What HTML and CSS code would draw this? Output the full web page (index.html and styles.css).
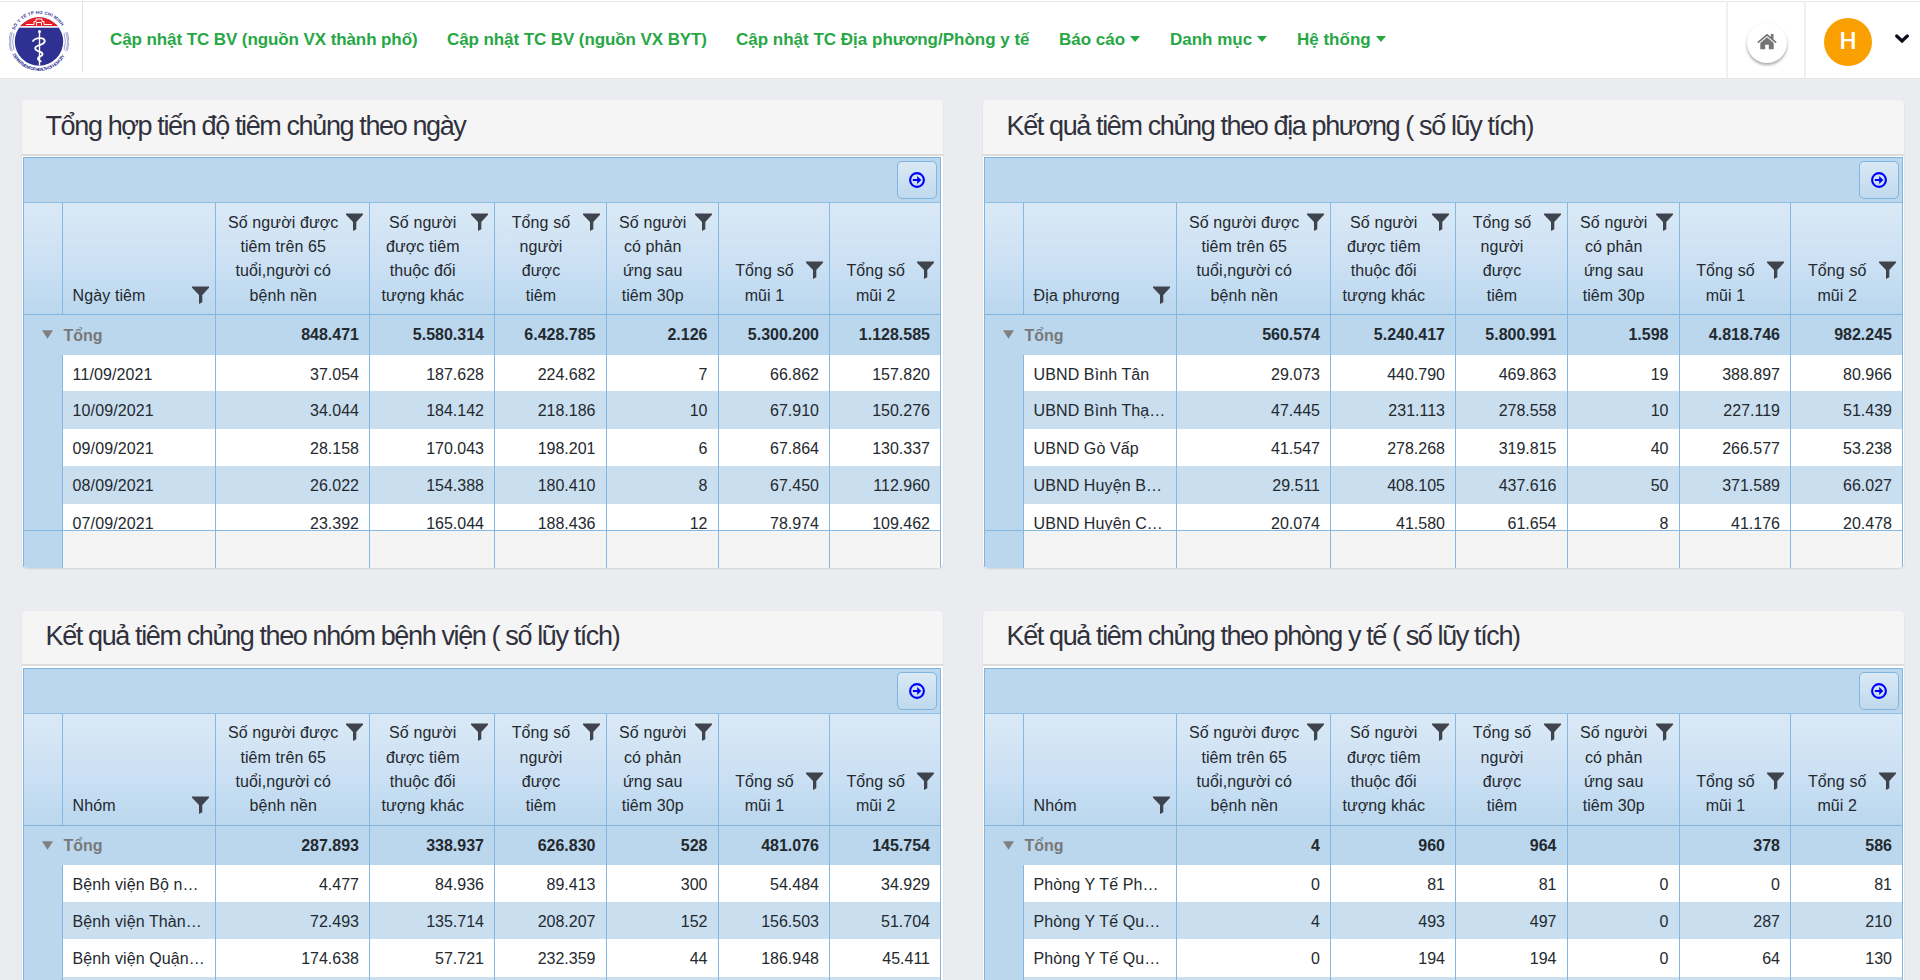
FILE: index.html
```html
<!DOCTYPE html>
<html lang="vi">
<head>
<meta charset="utf-8">
<title>Tiêm chủng</title>
<link rel="stylesheet" href="styles.css">
</head>
<body>
<svg class="defs" width="0" height="0" aria-hidden="true">
  <symbol id="filter" viewBox="0 0 17 18"><path d="M0 0.6h17v1.2L10.3 9v7.2L7 18V9L0 1.8z"/></symbol>
  <symbol id="go" viewBox="0 0 16 16"><circle cx="8" cy="8" r="6.9" fill="none" stroke="#00f" stroke-width="2.1"/><path d="M3.9 7h4.3V4l4.1 4-4.1 4V9H3.9z" fill="#00f"/></symbol>
  <symbol id="tri" viewBox="0 0 11 9"><path d="M0 0.3h11L5.5 8.8z"/></symbol>
</svg>

<header class="topbar">
  <div class="brand">
    <svg class="logo" viewBox="0 0 60 60">
      <defs>
        <path id="arcTop" d="M5.6 18.8A26.4 26.4 0 0 1 54.6 18.8"/>
        <path id="arcBottom" d="M3.6 43A29.4 29.4 0 0 0 56.4 43"/>
        <clipPath id="disc"><circle cx="30" cy="30" r="24.2"/></clipPath>
      </defs>
      <g clip-path="url(#disc)">
        <rect width="60" height="60" fill="#2e3192"/>
        <rect width="60" height="14.6" fill="#ed1c24"/>
        <rect y="14.6" width="60" height="1.6" fill="#fff"/>
        <path d="M17 13h8v-3h2V7.500h6V10h2v3h8M27.500 14v-3h5v3" fill="none" stroke="#fff" stroke-width="1"/>
      </g>
      <g fill="none" stroke="#8b8dc4" stroke-width=".8">
        <path d="M3.300 20.300A28.400 28.400 0 0 0 3.300 39.700M1.500 20.800A30 30 0 0 0 1.500 39.200M5 21.500A26.500 26.500 0 0 0 5 38.500"/>
        <path d="M56.700 20.300A28.400 28.400 0 0 1 56.700 39.700M58.500 20.800A30 30 0 0 1 58.500 39.200M55 21.500A26.500 26.500 0 0 1 55 38.500"/>
      </g>
      <path d="M30.500 20v34" stroke="#fff" stroke-width="1.400"/>
      <circle cx="30.500" cy="20" r="1.500" fill="#fff"/>
      <path d="M23.500 30.200c1.500-3 4.500-3.500 7.500-3.600 5.500-.1 6.500 4.400 1.500 6.200-5.500 1.900-7.800 3.200-5.300 5.700 2.300 2 7.300 1.700 6.300 4.700-1 2.300-5.500 2-4.500 4.600.6 1.500 2.500 1.200 3 2.700" fill="none" stroke="#fff" stroke-width="1.800"/>
      <text class="seal"><textPath href="#arcTop" textLength="58">SỞ Y TẾ TP HỒ CHÍ MINH</textPath></text>
      <text class="seal"><textPath href="#arcBottom" textLength="64">DEPARTMENT OF HEALTH OF HCM CITY</textPath></text>
    </svg>
  </div>
  <nav class="menu">
    <a class="link l1">Cập nhật TC BV (nguồn VX thành phố)</a>
    <a class="link l2">Cập nhật TC BV (nguồn VX BYT)</a>
    <a class="link l3">Cập nhật TC Địa phương/Phòng y tế</a>
    <a class="link drop l4">Báo cáo</a>
    <a class="link drop l5">Danh mục</a>
    <a class="link drop l6">Hệ thống</a>
  </nav>
  <div class="home">
    <span class="home-btn"><svg width="20" height="17" viewBox="0 0 20 17" fill="#757575"><path d="M10 0.700L0.300 9l1.100 1.300L10 3l8.600 7.300L19.700 9l-3.200-2.800V1h-2.700v2.900z"/><path d="M10 4.300L3.300 10v6.200h4.900v-4.500h3.600v4.500h4.900V10z"/></svg></span>
  </div>
  <div class="user">
    <span class="avatar">H</span>
    <svg class="chev" width="14" height="10" viewBox="0 0 14 10"><path d="M1.700 2L7 7l5.300-5" fill="none" stroke="#0b0b1c" stroke-width="3.200" stroke-linecap="round"/></svg>
  </div>
</header>

<main class="board">
  <section class="card">
    <h2 class="title">Tổng hợp tiến độ tiêm chủng theo ngày</h2>
    <div class="grid">
      <div class="toolbar"><button class="go"><svg width="16" height="16"><use href="#go"/></svg></button></div>
      <div class="row head">
        <div></div>
        <div class="first"><span>Ngày tiêm</span><svg class="f"><use href="#filter"/></svg></div>
        <div><span>Số người được<br>tiêm trên 65<br>tuổi,người có<br>bệnh nền</span><svg class="f"><use href="#filter"/></svg></div>
        <div><span>Số người<br>được tiêm<br>thuộc đối<br>tượng khác</span><svg class="f"><use href="#filter"/></svg></div>
        <div><span>Tổng số<br>người<br>được<br>tiêm</span><svg class="f"><use href="#filter"/></svg></div>
        <div><span>Số người<br>có phản<br>ứng sau<br>tiêm 30p</span><svg class="f"><use href="#filter"/></svg></div>
        <div><span>Tổng số<br>mũi 1</span><svg class="f"><use href="#filter"/></svg></div>
        <div><span>Tổng số<br>mũi 2</span><svg class="f"><use href="#filter"/></svg></div>
      </div>
      <div class="rows">
        <div class="row total"><div class="group"><svg class="tri"><use href="#tri"/></svg>Tổng</div><div>848.471</div><div>5.580.314</div><div>6.428.785</div><div>2.126</div><div>5.300.200</div><div>1.128.585</div></div>
        <div class="row data"><div></div><div>11/09/2021</div><div>37.054</div><div>187.628</div><div>224.682</div><div>7</div><div>66.862</div><div>157.820</div></div>
        <div class="row data"><div></div><div>10/09/2021</div><div>34.044</div><div>184.142</div><div>218.186</div><div>10</div><div>67.910</div><div>150.276</div></div>
        <div class="row data"><div></div><div>09/09/2021</div><div>28.158</div><div>170.043</div><div>198.201</div><div>6</div><div>67.864</div><div>130.337</div></div>
        <div class="row data"><div></div><div>08/09/2021</div><div>26.022</div><div>154.388</div><div>180.410</div><div>8</div><div>67.450</div><div>112.960</div></div>
        <div class="row data"><div></div><div>07/09/2021</div><div>23.392</div><div>165.044</div><div>188.436</div><div>12</div><div>78.974</div><div>109.462</div></div>
      </div>
      <div class="row foot"><div></div><div></div><div></div><div></div><div></div><div></div><div></div><div></div></div>
    </div>
  </section>

  <section class="card">
    <h2 class="title">Kết quả tiêm chủng theo địa phương ( số lũy tích)</h2>
    <div class="grid right">
      <div class="toolbar"><button class="go"><svg width="16" height="16"><use href="#go"/></svg></button></div>
      <div class="row head">
        <div></div>
        <div class="first"><span>Địa phương</span><svg class="f"><use href="#filter"/></svg></div>
        <div><span>Số người được<br>tiêm trên 65<br>tuổi,người có<br>bệnh nền</span><svg class="f"><use href="#filter"/></svg></div>
        <div><span>Số người<br>được tiêm<br>thuộc đối<br>tượng khác</span><svg class="f"><use href="#filter"/></svg></div>
        <div><span>Tổng số<br>người<br>được<br>tiêm</span><svg class="f"><use href="#filter"/></svg></div>
        <div><span>Số người<br>có phản<br>ứng sau<br>tiêm 30p</span><svg class="f"><use href="#filter"/></svg></div>
        <div><span>Tổng số<br>mũi 1</span><svg class="f"><use href="#filter"/></svg></div>
        <div><span>Tổng số<br>mũi 2</span><svg class="f"><use href="#filter"/></svg></div>
      </div>
      <div class="rows">
        <div class="row total"><div class="group"><svg class="tri"><use href="#tri"/></svg>Tổng</div><div>560.574</div><div>5.240.417</div><div>5.800.991</div><div>1.598</div><div>4.818.746</div><div>982.245</div></div>
        <div class="row data"><div></div><div>UBND Bình Tân</div><div>29.073</div><div>440.790</div><div>469.863</div><div>19</div><div>388.897</div><div>80.966</div></div>
        <div class="row data"><div></div><div>UBND Bình Thạ…</div><div>47.445</div><div>231.113</div><div>278.558</div><div>10</div><div>227.119</div><div>51.439</div></div>
        <div class="row data"><div></div><div>UBND Gò Vấp</div><div>41.547</div><div>278.268</div><div>319.815</div><div>40</div><div>266.577</div><div>53.238</div></div>
        <div class="row data"><div></div><div>UBND Huyện B…</div><div>29.511</div><div>408.105</div><div>437.616</div><div>50</div><div>371.589</div><div>66.027</div></div>
        <div class="row data"><div></div><div>UBND Huyện C…</div><div>20.074</div><div>41.580</div><div>61.654</div><div>8</div><div>41.176</div><div>20.478</div></div>
      </div>
      <div class="row foot"><div></div><div></div><div></div><div></div><div></div><div></div><div></div><div></div></div>
    </div>
  </section>

  <section class="card">
    <h2 class="title">Kết quả tiêm chủng theo nhóm bệnh viện ( số lũy tích)</h2>
    <div class="grid">
      <div class="toolbar"><button class="go"><svg width="16" height="16"><use href="#go"/></svg></button></div>
      <div class="row head">
        <div></div>
        <div class="first"><span>Nhóm</span><svg class="f"><use href="#filter"/></svg></div>
        <div><span>Số người được<br>tiêm trên 65<br>tuổi,người có<br>bệnh nền</span><svg class="f"><use href="#filter"/></svg></div>
        <div><span>Số người<br>được tiêm<br>thuộc đối<br>tượng khác</span><svg class="f"><use href="#filter"/></svg></div>
        <div><span>Tổng số<br>người<br>được<br>tiêm</span><svg class="f"><use href="#filter"/></svg></div>
        <div><span>Số người<br>có phản<br>ứng sau<br>tiêm 30p</span><svg class="f"><use href="#filter"/></svg></div>
        <div><span>Tổng số<br>mũi 1</span><svg class="f"><use href="#filter"/></svg></div>
        <div><span>Tổng số<br>mũi 2</span><svg class="f"><use href="#filter"/></svg></div>
      </div>
      <div class="rows">
        <div class="row total"><div class="group"><svg class="tri"><use href="#tri"/></svg>Tổng</div><div>287.893</div><div>338.937</div><div>626.830</div><div>528</div><div>481.076</div><div>145.754</div></div>
        <div class="row data"><div></div><div>Bệnh viện Bộ n…</div><div>4.477</div><div>84.936</div><div>89.413</div><div>300</div><div>54.484</div><div>34.929</div></div>
        <div class="row data"><div></div><div>Bệnh viện Thàn…</div><div>72.493</div><div>135.714</div><div>208.207</div><div>152</div><div>156.503</div><div>51.704</div></div>
        <div class="row data"><div></div><div>Bệnh viện Quận…</div><div>174.638</div><div>57.721</div><div>232.359</div><div>44</div><div>186.948</div><div>45.411</div></div>
        <div class="row data"><div></div><div></div><div></div><div></div><div></div><div></div><div></div><div></div></div>
      </div>
    </div>
  </section>

  <section class="card">
    <h2 class="title">Kết quả tiêm chủng theo phòng y tế ( số lũy tích)</h2>
    <div class="grid right">
      <div class="toolbar"><button class="go"><svg width="16" height="16"><use href="#go"/></svg></button></div>
      <div class="row head">
        <div></div>
        <div class="first"><span>Nhóm</span><svg class="f"><use href="#filter"/></svg></div>
        <div><span>Số người được<br>tiêm trên 65<br>tuổi,người có<br>bệnh nền</span><svg class="f"><use href="#filter"/></svg></div>
        <div><span>Số người<br>được tiêm<br>thuộc đối<br>tượng khác</span><svg class="f"><use href="#filter"/></svg></div>
        <div><span>Tổng số<br>người<br>được<br>tiêm</span><svg class="f"><use href="#filter"/></svg></div>
        <div><span>Số người<br>có phản<br>ứng sau<br>tiêm 30p</span><svg class="f"><use href="#filter"/></svg></div>
        <div><span>Tổng số<br>mũi 1</span><svg class="f"><use href="#filter"/></svg></div>
        <div><span>Tổng số<br>mũi 2</span><svg class="f"><use href="#filter"/></svg></div>
      </div>
      <div class="rows">
        <div class="row total"><div class="group"><svg class="tri"><use href="#tri"/></svg>Tổng</div><div>4</div><div>960</div><div>964</div><div></div><div>378</div><div>586</div></div>
        <div class="row data"><div></div><div>Phòng Y Tế Ph…</div><div>0</div><div>81</div><div>81</div><div>0</div><div>0</div><div>81</div></div>
        <div class="row data"><div></div><div>Phòng Y Tế Qu…</div><div>4</div><div>493</div><div>497</div><div>0</div><div>287</div><div>210</div></div>
        <div class="row data"><div></div><div>Phòng Y Tế Qu…</div><div>0</div><div>194</div><div>194</div><div>0</div><div>64</div><div>130</div></div>
        <div class="row data"><div></div><div></div><div></div><div></div><div></div><div></div><div></div><div></div></div>
      </div>
    </div>
  </section>
</main>
</body>
</html>
```
FILE: styles.css
```css
* { box-sizing: border-box; }
body {
  margin: 0;
  background: #ebecf0;
  color: #24292e;
  font: 16px "Liberation Sans", Arial, sans-serif;
}
.defs { position: absolute; }

.topbar {
  display: flex;
  height: 79px;
  padding-top: 1px;
  background: #fff;
  border-bottom: 1px solid #e4e4e6;
  box-shadow: inset 0 2px 0 -1px #fff, inset 0 2px 0 #e9e9e9;
}
.brand {
  width: 83px;
  height: 71px;
  padding: 10px 0 0 9px;
  border-right: 1px solid #e2e2e2;
}
.logo { display: block; width: 60px; height: 61px; }
.seal { font-size: 4.4px; font-weight: bold; fill: #2e3192; }
.menu { display: flex; flex: 1; padding-left: 27px; }
.link {
  display: flex;
  height: 76px;
  padding-top: 29px;
  line-height: 20px;
  font-size: 17px;
  font-weight: bold;
  color: #28a745;
  white-space: nowrap;
}
.l1 { width: 337px; letter-spacing: -.09px; }
.l2 { width: 289px; letter-spacing: -.09px; }
.l3 { width: 323px; }
.l4 { width: 111px; }
.l5 { width: 127px; }
.drop::after {
  content: "";
  height: 6px;
  margin: 6px 0 0 5px;
  border: 5px solid transparent;
  border-top: 6px solid #28a745;
  border-bottom: 0;
}
.home {
  width: 78px;
  padding: 22px 0 0 19px;
  border-left: 2px solid #f1f1f1;
}
.home-btn {
  display: flex;
  width: 40px;
  height: 40px;
  align-items: center;
  justify-content: center;
  padding-bottom: 3px;
  border-radius: 50%;
  box-shadow: 0 2px 3px rgba(0, 0, 0, .35);
}
.user {
  display: flex;
  width: 116px;
  padding: 17px 0 0 18px;
  border-left: 2px solid #f1f1f1;
}
.avatar {
  width: 48px;
  height: 48px;
  border-radius: 50%;
  background: #fa9f00;
  color: #fff;
  font: 500 24px/46px Roboto, sans-serif;
  text-align: center;
}
.chev { margin: 16px 0 0 22.500px; }

.board {
  display: grid;
  height: 901px;
  overflow: hidden;
  grid-template-columns: 921px 921px;
  grid-template-rows: 468px 468.500px;
  gap: 42.500px 40px;
  padding: 21px 0 0 22px;
}
.card {
  overflow: hidden;
  border-radius: 5px;
  background: #fff;
  box-shadow: 0 1px 2px rgba(0, 0, 0, .1);
}
.title {
  height: 55.500px;
  margin: 0 0 1.500px;
  padding: 8.500px 0 0 23.500px;
  border-bottom: 2px solid #dcdcdc;
  background: #f5f5f5;
  color: #30313c;
  font-size: 27px;
  font-weight: normal;
  line-height: 35px;
  letter-spacing: -1.380px;
  white-space: nowrap;
}
.grid {
  width: 918px;
  margin-left: 1px;
  border: 1px solid #7fb5de;
  border-bottom: 0;
  background: #bbd7ee;
}
.right { width: 919px; }
.toolbar {
  display: flex;
  height: 45px;
  justify-content: flex-end;
  padding: 3px 3px 0;
  border-bottom: 1px solid #8fc0e4;
}
.go {
  display: flex;
  width: 40px;
  height: 38px;
  align-items: center;
  justify-content: center;
  padding: 0;
  border: 1px solid #7fb5de;
  border-radius: 5px;
  background: linear-gradient(#dae9f5, #bfd9ee);
}
.row {
  display: grid;
  grid-template-columns: 38px 153px 154px 125px 111.500px 112px 111.500px 1fr;
}
.row > div + div { border-left: 1px solid #84b8e0; }
.head {
  height: 112px;
  border-bottom: 1px solid #7fb5de;
  background: linear-gradient(#dae9f6, #cde1f4 50%, #bad7ee);
  line-height: 24.300px;
  letter-spacing: .1px;
}
.head > div { display: flex; align-items: flex-end; padding: 0 6px 6px 0; }
.head span { flex: 1; padding-left: 4.500px; text-align: center; white-space: nowrap; }
.head .first span { padding-left: 9.600px; text-align: left; }
.f {
  flex: none;
  align-self: flex-end;
  width: 17px;
  height: 18px;
  margin-bottom: 77.500px;
  fill: #3f444c;
}
.first .f { margin-bottom: 4.500px; }
.head > div:nth-child(n+7) .f { margin-bottom: 29px; }
.rows { height: 215px; overflow: hidden; }
.total {
  grid-template-columns: 191px 154px 125px 111.500px 112px 111.500px 1fr;
  height: 39.500px;
  line-height: 40px;
  font-weight: bold;
  text-align: right;
}
.total > div { padding-right: 10px; border-bottom: 1px solid #8fc0e4; }
.total .group {
  display: flex;
  align-items: center;
  padding-left: 18px;
  border: 0;
  color: #787878;
}
.tri { width: 11px; height: 9px; margin: 0 10.500px 2px 0; fill: #808080; }
.data { height: 37.600px; line-height: 40px; text-align: right; }
.total + .data { height: 36.500px; }
.data > div { background: #fff; padding-right: 10px; white-space: nowrap; overflow: hidden; }
.data:nth-child(odd) > div { background: #c9deef; }
.data > div:first-child { background: #bbd7ee; }
.data > div:nth-child(2) { padding: 0 0 0 9.600px; text-align: left; letter-spacing: .1px; }
.foot { height: 39px; border-top: 1px solid #84b8e0; }
.foot > div + div { background: #f4f4f4; }
```
